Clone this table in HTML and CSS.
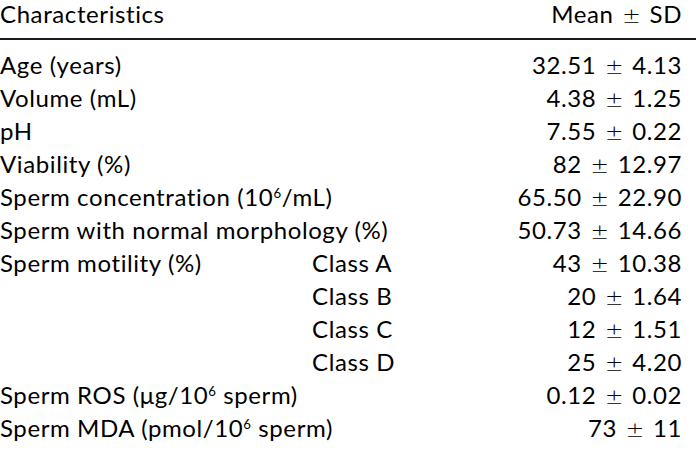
FILE: index.html
```html
<!DOCTYPE html>
<html>
<head>
<meta charset="utf-8">
<link rel="stylesheet" href="styles.css">
</head>
<body>
<table class="stats">
  <colgroup>
    <col class="col-label">
    <col class="col-sub">
    <col class="col-value">
  </colgroup>
  <thead>
    <tr>
      <th class="label" colspan="2">Characteristics</th>
      <th class="value">Mean <span class="pm">±</span> SD</th>
    </tr>
  </thead>
  <tbody>
    <tr class="first"><td class="label" colspan="2">Age (years)</td><td class="value">32.51 <span class="pm">±</span> 4.13</td></tr>
    <tr><td class="label" colspan="2">Volume (mL)</td><td class="value">4.38 <span class="pm">±</span> 1.25</td></tr>
    <tr><td class="label" colspan="2">pH</td><td class="value">7.55 <span class="pm">±</span> 0.22</td></tr>
    <tr><td class="label" colspan="2">Viability (%)</td><td class="value">82 <span class="pm">±</span> 12.97</td></tr>
    <tr><td class="label" colspan="2">Sperm concentration (10<sup>6</sup>/mL)</td><td class="value">65.50 <span class="pm">±</span> 22.90</td></tr>
    <tr><td class="label" colspan="2">Sperm with normal morphology (%)</td><td class="value">50.73 <span class="pm">±</span> 14.66</td></tr>
    <tr><td class="label">Sperm motility (%)</td><td class="sub">Class A</td><td class="value">43 <span class="pm">±</span> 10.38</td></tr>
    <tr><td class="label"></td><td class="sub">Class B</td><td class="value">20 <span class="pm">±</span> 1.64</td></tr>
    <tr><td class="label"></td><td class="sub">Class C</td><td class="value">12 <span class="pm">±</span> 1.51</td></tr>
    <tr><td class="label"></td><td class="sub">Class D</td><td class="value">25 <span class="pm">±</span> 4.20</td></tr>
    <tr><td class="label" colspan="2">Sperm ROS (μg/10<sup>6</sup> sperm)</td><td class="value">0.12 <span class="pm">±</span> 0.02</td></tr>
    <tr><td class="label" colspan="2">Sperm MDA (pmol/10<sup>6</sup> sperm)</td><td class="value">73 <span class="pm">±</span> 11</td></tr>
  </tbody>
</table>
</body>
</html>
```
FILE: styles.css
```css
html, body {
  margin: 0;
  padding: 0;
  background: #ffffff;
}
body {
  font-family: Lato, "Open Sans", sans-serif;
  font-size: 24px;
  letter-spacing: 0.6px;
  color: #000000;
}
.stats {
  width: 696px;
  border-collapse: collapse;
  table-layout: fixed;
}
.col-label { width: 312px; }
.col-sub { width: 150px; }
.col-value { width: 234px; }
.stats th {
  font-weight: normal;
  height: 38px;
  padding: 0;
  vertical-align: top;
  line-height: 28px;
  border-bottom: 2px solid #1a1a1a;
}
.stats td {
  padding: 0;
  height: 33px;
  line-height: 33px;
  vertical-align: middle;
}
.stats .first td {
  padding-top: 8px;
}
.label {
  text-align: left;
  white-space: nowrap;
}
.sub {
  text-align: left;
  white-space: nowrap;
}
.value {
  text-align: right;
  padding-right: 14px !important;
  white-space: nowrap;
  word-spacing: 2px;
}
.pm {
  font-family: "DejaVu Sans", sans-serif;
  font-weight: 200;
  font-size: 22px;
  line-height: 0;
  letter-spacing: 0;
}
sup {
  font-size: 0.55em;
  line-height: 0;
  vertical-align: 0.6em;
}
```
